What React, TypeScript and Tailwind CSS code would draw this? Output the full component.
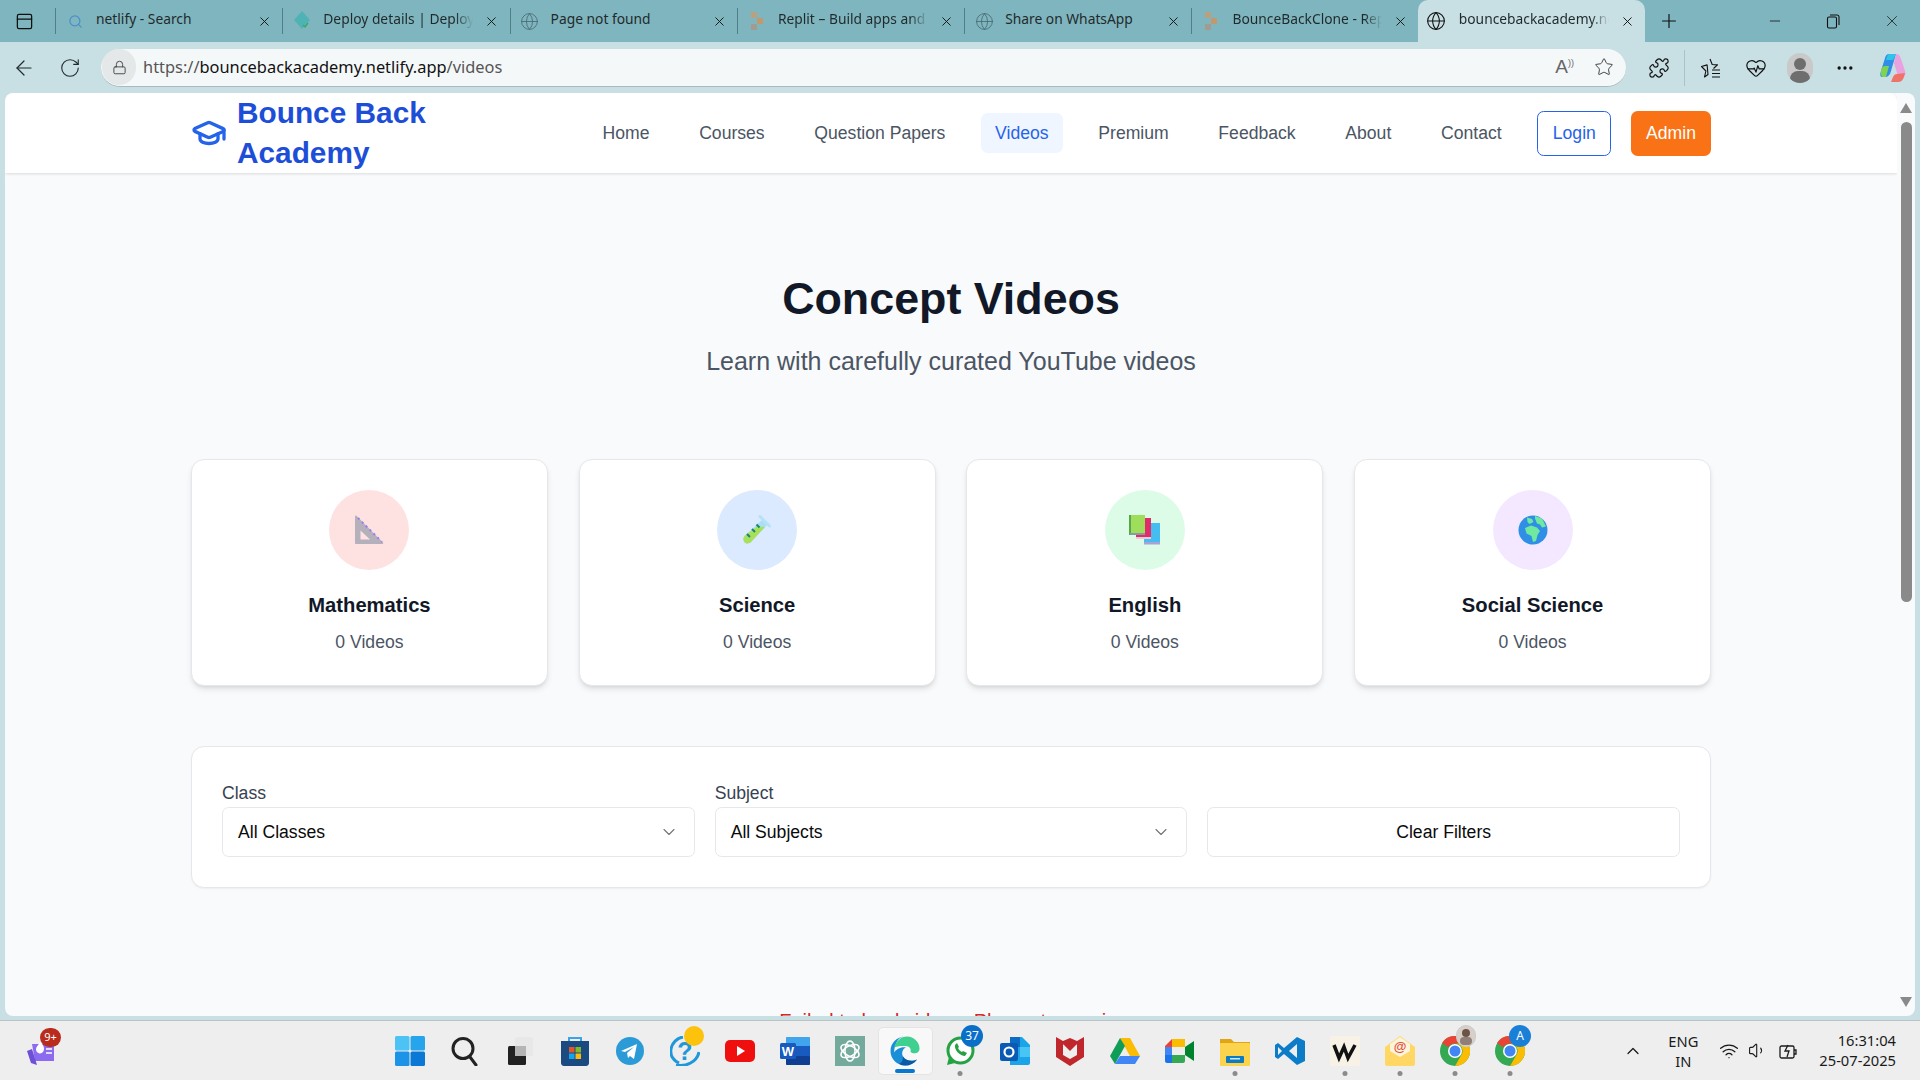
import type { ReactNode } from 'react';
import {
  ArrowLeft,
  ChevronDown,
  ChevronUp,
  Ellipsis,
  Globe,
  GraduationCap,
  HeartPulse,
  Lock,
  Minus,
  PanelTop,
  Plus,
  Puzzle,
  RotateCw,
  Search,
  Star,
  Volume1,
  Wifi,
  X,
} from 'lucide-react';

const DeployIcon = () => (
  <svg width="20" height="20" viewBox="0 0 20 20">
    <path d="M10 0l8 9-8 9-8-9z" fill="#4fb3b5" />
    <path d="M11 14l2 2 3-4" fill="none" stroke="#3fa66b" strokeWidth="1.4" />
  </svg>
);

const ReplitIcon = () => (
  <svg width="14" height="20" viewBox="0 0 14 20">
    <rect x="1" y="1" width="6" height="6" fill="#b9a17f" />
    <rect x="7" y="7" width="6" height="6" fill="#c09a6e" />
    <rect x="1" y="13" width="6" height="6" fill="#a49b90" />
  </svg>
);

const tabs: { title: string; icon: ReactNode; fade?: boolean }[] = [
  { title: 'netlify - Search', icon: <Search size={15} className="text-[#4a90c8]" strokeWidth={2} /> },
  { title: 'Deploy details | Deploys | bounce', icon: <DeployIcon />, fade: true },
  { title: 'Page not found', icon: <Globe size={19} strokeWidth={1} className="text-[#44666d]" /> },
  { title: 'Replit – Build apps and sites', icon: <ReplitIcon />, fade: true },
  { title: 'Share on WhatsApp', icon: <Globe size={19} strokeWidth={1} className="text-[#44666d]" /> },
  { title: 'BounceBackClone - Replit', icon: <ReplitIcon />, fade: true },
];

const navLinks = ['Home', 'Courses', 'Question Papers', 'Videos', 'Premium', 'Feedback', 'About', 'Contact'];

const RulerEmoji = () => (
  <svg width="30" height="30" viewBox="0 0 30 30">
    <path d="M1 1.5c0-1 1-1.300 1.700-.6L29 27.500c.6.7.2 1.500-.7 1.500H2c-.6 0-1-.4-1-1z" fill="#b4b1bd" />
    <path d="M6.500 15.500L16 24.500H6.500z" fill="#ffe2e2" />
    <path d="M4 3l24 24" stroke="#9a7cf0" strokeWidth="2" strokeDasharray="2 3.500" />
  </svg>
);

const TubeEmoji = () => (
  <svg width="30" height="30" viewBox="0 0 30 30">
    <path d="M20 5l5 5L9 27c-2 2-5 1.800-6.500.2S1 22.500 3 20.500z" fill="#a9def5" />
    <path d="M15 11.500l8 .5L9 27c-2 2-5 1.800-6.500.2S1 22.500 3 20.500z" fill="#a8e05a" />
    <path d="M18 1.500l9.500 9.500" stroke="#b5e2f8" strokeWidth="3" strokeLinecap="round" />
    <path d="M5 19l3 3M10 14l3 3M14.500 9.500l3 3" stroke="#16857a" strokeWidth="2" />
  </svg>
);

const BooksEmoji = () => (
  <svg width="32" height="30" viewBox="0 0 32 30">
    <rect x="15" y="8" width="16" height="20" fill="#45bdf0" />
    <rect x="15" y="27" width="16" height="2.500" fill="#a7a3d6" />
    <rect x="7" y="3" width="15" height="20" fill="#e02c68" />
    <rect x="7" y="22" width="15" height="2" fill="#f3c8d6" />
    <rect x="0" y="0" width="16" height="18" fill="#9fde5a" />
    <rect x="0" y="0" width="2" height="20" fill="#56a84a" />
    <rect x="1" y="18" width="15" height="2" fill="#8a9aa0" />
  </svg>
);

const GlobeEmoji = () => (
  <svg width="30" height="30" viewBox="0 0 30 30">
    <circle cx="15" cy="15" r="14.500" fill="#2f8fe6" />
    <path d="M9 2.500l5 1.500 1.500 3-4 2-2-2zM17 1l7 2.500 4 8-4 1-2-3-3-1-2-5zM7 13l6-2.500 6 2 3 3.500-2.500 4-1.500 6-3 1-1.500-6-5-2.500z" fill="#6fe8a0" />
  </svg>
);

const subjects = [
  { name: 'Mathematics', circle: 'bg-[#fee2e2]', emoji: <RulerEmoji /> },
  { name: 'Science', circle: 'bg-[#dbeafe]', emoji: <TubeEmoji /> },
  { name: 'English', circle: 'bg-[#dcfce7]', emoji: <BooksEmoji /> },
  { name: 'Social Science', circle: 'bg-[#f3e8ff]', emoji: <GlobeEmoji /> },
];

const Dot = () => <span className="absolute bottom-[-10px] left-1/2 h-[5px] w-[5px] -translate-x-1/2 rounded-full bg-[#8b8b8b]" />;

function ChromeLogo() {
  return (
    <svg width="30" height="30" viewBox="0 0 30 30">
      <circle cx="15" cy="15" r="15" fill="#34a853" />
      <path d="M15 0a15 15 0 0 1 13 7.500H15a7.500 7.500 0 0 0-6.500 3.750L2 7A15 15 0 0 1 15 0z" fill="#ea4335" />
      <path d="M28 7.500A15 15 0 0 1 15 30l6.500-11.250A7.500 7.500 0 0 0 15 7.500z" fill="#fbbc04" />
      <circle cx="15" cy="15" r="7" fill="#fff" />
      <circle cx="15" cy="15" r="5.500" fill="#4285f4" />
    </svg>
  );
}

const taskIcons: { key: string; dot?: boolean; active?: boolean; badge?: ReactNode; svg: ReactNode }[] = [
  {
    key: 'start',
    svg: (
      <svg width="30" height="30" viewBox="0 0 30 30">
        <rect x="0" y="0" width="14.500" height="14.500" rx="1.500" fill="#4cc2f5" />
        <rect x="15.500" y="0" width="14.500" height="14.500" rx="1.500" fill="#27a5ec" />
        <rect x="0" y="15.500" width="14.500" height="14.500" rx="1.500" fill="#1b93e6" />
        <rect x="15.500" y="15.500" width="14.500" height="14.500" rx="1.500" fill="#0a78d4" />
      </svg>
    ),
  },
  {
    key: 'search',
    svg: (
      <svg width="30" height="30" viewBox="0 0 30 30" fill="none" stroke="#222" strokeWidth="3">
        <circle cx="13" cy="12.500" r="10" />
        <path d="M20 21l6 8" strokeLinecap="round" />
      </svg>
    ),
  },
  {
    key: 'taskview',
    svg: (
      <svg width="30" height="30" viewBox="0 0 30 30">
        <rect x="3" y="10" width="18" height="19" rx="1.500" fill="#222" />
        <rect x="10" y="1" width="18" height="19" rx="1.500" fill="#e6e6e6" opacity=".85" />
        <rect x="10" y="10" width="11" height="10" fill="#b5b5b5" />
      </svg>
    ),
  },
  {
    key: 'store',
    svg: (
      <svg width="30" height="30" viewBox="0 0 30 30">
        <path d="M9 5V2h12v3" fill="none" stroke="#39a5e8" strokeWidth="2" />
        <path d="M1 5h28v22c0 1.500-1 3-3 3H4c-2 0-3-1.500-3-3z" fill="#1a4a80" />
        <rect x="9" y="11" width="5.500" height="5.500" fill="#e8542a" />
        <rect x="15.500" y="11" width="5.500" height="5.500" fill="#7fba25" />
        <rect x="9" y="17.500" width="5.500" height="5.500" fill="#10a5ee" />
        <rect x="15.500" y="17.500" width="5.500" height="5.500" fill="#fcb813" />
      </svg>
    ),
  },
  {
    key: 'telegram',
    svg: (
      <svg width="30" height="30" viewBox="0 0 30 30">
        <circle cx="15" cy="15" r="14" fill="#2a9bd6" />
        <path d="M6 15l16-7-3 15-4-3-2 2-1-5 7-6-9 5z" fill="#fff" />
      </svg>
    ),
  },
  {
    key: 'help',
    badge: <span className="absolute right-[-4px] top-[-10px] h-[20px] w-[20px] rounded-full bg-[#fcc20c]" />,
    svg: (
      <svg width="30" height="30" viewBox="0 0 30 30">
        <path d="M9 27C3 24 0 19 1 13 2 7 7 2 13 1" fill="none" stroke="#1e98d8" strokeWidth="3" />
        <path d="M6 29c10 2 21-3 23-13" fill="none" stroke="#1e98d8" strokeWidth="3" />
        <text x="15" y="24" textAnchor="middle" fontSize="25" fontWeight="700" fontFamily="Liberation Sans" fill="#1e98d8">?</text>
      </svg>
    ),
  },
  {
    key: 'youtube',
    svg: (
      <svg width="30" height="30" viewBox="0 0 30 30">
        <rect x="0" y="4" width="30" height="22" rx="5" fill="#f00f0f" />
        <path d="M12 10l8 5-8 5z" fill="#fff" />
      </svg>
    ),
  },
  {
    key: 'word',
    svg: (
      <svg width="30" height="30" viewBox="0 0 30 30">
        <rect x="6" y="1" width="24" height="28" rx="2" fill="#2b7cd3" />
        <rect x="6" y="10" width="24" height="10" fill="#185abd" />
        <rect x="6" y="20" width="24" height="9" rx="1" fill="#103f91" />
        <rect x="6" y="1" width="24" height="9" rx="1" fill="#41a5ee" />
        <rect x="0" y="7" width="16" height="16" rx="1.500" fill="#185abd" />
        <text x="8" y="20" textAnchor="middle" fontSize="13" fontWeight="700" fontFamily="Liberation Sans" fill="#fff">W</text>
      </svg>
    ),
  },
  {
    key: 'chatgpt',
    svg: (
      <svg width="30" height="30" viewBox="0 0 30 30">
        <rect width="30" height="30" fill="#74aa9c" />
        <g fill="none" stroke="#fff" strokeWidth="1.500">
          <ellipse cx="15" cy="15" rx="5" ry="10" />
          <ellipse cx="15" cy="15" rx="5" ry="10" transform="rotate(60 15 15)" />
          <ellipse cx="15" cy="15" rx="5" ry="10" transform="rotate(120 15 15)" />
        </g>
      </svg>
    ),
  },
  {
    key: 'edge',
    active: true,
    svg: (
      <svg width="30" height="30" viewBox="0 0 30 30">
        <path d="M15 .5C7 .5 .5 7 .5 15S7 29.500 15 29.500c5 0 9-2 12-6-4 2-11 2-14-3-2-4 0-8 3-9-5-1-10 2-12 5C5 6 9 .5 15 .5z" fill="#1a8fd8" />
        <path d="M4 12C6 5 11 .5 17 .5c7 0 12.500 6 12.500 12 0 5-6 6-9 3.500 1-3-1-6-5-6s-9 0-11.500 2z" fill="#3fcf8e" />
        <path d="M13 20.500c3 5 10 5 14 3-3 4-7 6-12 6-3 0-5-1-6-2 3 0 4-4 4-7z" fill="#0c59a4" />
      </svg>
    ),
  },
  {
    key: 'whatsapp',
    dot: true,
    badge: (
      <span className="absolute right-[-8px] top-[-11px] flex h-[22px] w-[22px] items-center justify-center rounded-full bg-[#0a6fc9] text-[12px] text-white">37</span>
    ),
    svg: (
      <svg width="30" height="30" viewBox="0 0 30 30">
        <circle cx="15.500" cy="14.500" r="12.500" fill="#fff" stroke="#25a244" strokeWidth="3" />
        <path d="M2 29l2-8 6 6z" fill="#25a244" />
        <path d="M10 9c-1 5 5 11 10 11l2-3-4-2-1 1c-2-1-3-2-4-4l1-1-2-4z" fill="#25a244" />
      </svg>
    ),
  },
  {
    key: 'outlook',
    svg: (
      <svg width="30" height="30" viewBox="0 0 30 30">
        <path d="M10 1h12l8 8v18c0 1-1 2-2 2H10z" fill="#1ba4e8" />
        <path d="M10 1h10v10H10z" fill="#0a6cc2" />
        <path d="M20 11h10v10H20z" fill="#49c5f5" />
        <rect x="0" y="7" width="18" height="18" rx="2" fill="#0a5ab5" />
        <circle cx="9" cy="16" r="4.500" fill="none" stroke="#fff" strokeWidth="2.200" />
      </svg>
    ),
  },
  {
    key: 'mcafee',
    svg: (
      <svg width="30" height="30" viewBox="0 0 30 30">
        <path d="M1 1l7 4 7-3 7 3 7-4v20l-14 9-14-9z" fill="#c0272d" />
        <path d="M8 8l7 4 7-4v11l-7 4-7-4z" fill="#eeeeee" />
        <path d="M8 8l7 7 7-7" fill="#c0272d" />
      </svg>
    ),
  },
  {
    key: 'drive',
    svg: (
      <svg width="30" height="30" viewBox="0 0 30 30">
        <path d="M10 2h10l10 18H20z" fill="#fbbc04" />
        <path d="M10 2L0 20l5 8 10-18z" fill="#0f9d58" />
        <path d="M5 28h20l5-8H10z" fill="#4285f4" />
      </svg>
    ),
  },
  {
    key: 'meet',
    svg: (
      <svg width="30" height="30" viewBox="0 0 30 30">
        <path d="M7 3h13v8H7v8H0V10z" fill="#ea4335" />
        <path d="M7 3h13v8H7z" fill="#fbbc04" />
        <path d="M0 11h7v8H0z" fill="#4285f4" />
        <path d="M0 19h7v8H2c-1 0-2-1-2-2z" fill="#1a73e8" />
        <path d="M7 19h13v6c0 1-1 2-2 2H7z" fill="#34a853" />
        <path d="M20 11v8l9 6V5z" fill="#00832d" />
      </svg>
    ),
  },
  {
    key: 'files',
    dot: true,
    svg: (
      <svg width="30" height="30" viewBox="0 0 30 30">
        <path d="M0 3h11l3 3h16v6H0z" fill="#e0a512" />
        <rect x="0" y="7" width="30" height="23" rx="1" fill="#fcd34d" />
        <rect x="6" y="20" width="18" height="7" rx="1" fill="#0b7bc4" />
        <rect x="10" y="22" width="10" height="1.500" fill="#cfe8f6" />
      </svg>
    ),
  },
  {
    key: 'vscode',
    svg: (
      <svg width="30" height="30" viewBox="0 0 30 30">
        <path d="M22 1l8 4v20l-8 4-13-11-6 5-3-2v-12l3-2 6 5z" fill="#0d7cc8" />
        <path d="M22 8v14l-8-7z" fill="#eeeeee" />
        <path d="M3 11l4 4-4 4z" fill="#eeeeee" />
      </svg>
    ),
  },
  {
    key: 'notion',
    dot: true,
    svg: (
      <svg width="30" height="30" viewBox="0 0 30 30">
        <rect width="30" height="30" rx="2" fill="#f8f1e6" />
        <path d="M4 9l5 13 5-11 4 11 7-13" fill="none" stroke="#111" strokeWidth="3.500" />
      </svg>
    ),
  },
  {
    key: 'mail',
    dot: true,
    svg: (
      <svg width="30" height="30" viewBox="0 0 30 30">
        <path d="M0 11L15 0l15 11v17c0 1-1 2-2 2H2c-1 0-2-1-2-2z" fill="#ffd765" />
        <path d="M5 8l10-7 10 7v7l-10 6-10-6z" fill="#fbf4dc" />
        <text x="15" y="15" textAnchor="middle" fontSize="13" fontWeight="700" fontFamily="Liberation Sans" fill="#e5503c">@</text>
      </svg>
    ),
  },
  {
    key: 'chrome',
    dot: true,
    badge: (
      <span className="absolute right-[-6px] top-[-11px] h-[22px] w-[20px] rounded-full border border-[#cccccc] bg-[#d8cfc8]">
        <span className="absolute left-[5px] top-[3px] h-[8px] w-[8px] rounded-full bg-[#6b5348]" />
        <span className="absolute left-[3px] top-[11px] h-[8px] w-[12px] rounded-full bg-[#8f7f76]" />
      </span>
    ),
    svg: <ChromeLogo />,
  },
  {
    key: 'chrome2',
    dot: true,
    badge: (
      <span className="absolute right-[-6px] top-[-11px] flex h-[22px] w-[22px] items-center justify-center rounded-full bg-[#1a7fd6] text-[12px] text-white">A</span>
    ),
    svg: <ChromeLogo />,
  },
];

function CopilotLogo() {
  return (
    <svg width="26" height="30" viewBox="0 0 26 30">
      <path d="M9 1h7l-5 17c-1 4-3 6-6 6H2C0 24 0 21 1 18L5 5c.7-2.500 2-4 4-4z" fill="#2f8fe8" />
      <path d="M1 18c0-3 2-5 5-5h3l-3 11H3c-2 0-2-3-2-6z" fill="#7fd34e" />
      <path d="M16 1c3 0 4 2 5 5l4 12c1 3 0 5-3 5h-4l-4-13z" fill="#e9a1e0" />
      <path d="M11 29h7c3 0 5-2 6-5l1-4-8 1c-2 0-3 1-4 3z" fill="#f0736a" />
      <path d="M9 1h7l-3 6H6C7 3 8 1 9 1z" fill="#30c5e8" />
    </svg>
  );
}

function Avatar() {
  return (
    <div className="relative h-[30px] w-[26px] overflow-hidden rounded-full bg-[#c9c9c9]">
      <span className="absolute left-[7px] top-[5px] h-[12px] w-[12px] rounded-full bg-[#6e6e6e]" />
      <span className="absolute left-[3px] top-[18px] h-[16px] w-[20px] rounded-full bg-[#6e6e6e]" />
    </div>
  );
}

function TabBar() {
  return (
    <div className="flex h-[42px] shrink-0 items-stretch bg-[#7fb5be] font-['Noto_Sans',sans-serif] text-[13.800px] text-[#1f2a2c]">
      <div className="flex w-[55px] items-center pl-[15px]">
        <PanelTop size={19} strokeWidth={1.6} className="text-[#111]" />
      </div>
      {tabs.map((tab) => (
        <div key={tab.title} className="flex w-[227.3px] items-center">
          <span className="h-[26px] w-px bg-[#4f7f87]" />
          <span className="flex w-[37px] justify-center pl-px">{tab.icon}</span>
          <span className="ml-[3px] w-[150px] overflow-hidden whitespace-nowrap pb-[3px]">
            {tab.fade ? (
              <span className="block [mask-image:linear-gradient(to_right,black_88%,transparent)]">{tab.title}</span>
            ) : (
              tab.title
            )}
          </span>
          <X size={15} strokeWidth={1.5} className="ml-[11px] text-[#111]" />
        </div>
      ))}
      <div className="ml-[-1px] flex w-[227px] items-center rounded-t-[10px] bg-[#c8dfe3]">
        <span className="flex w-[36px] justify-center"><Globe size={20} strokeWidth={1.3} className="text-[#111]" /></span>
        <span className="ml-[5px] w-[150px] overflow-hidden whitespace-nowrap pb-[3px] [mask-image:linear-gradient(to_right,black_88%,transparent)]">bouncebackacademy.netlify.app</span>
        <X size={15} strokeWidth={1.5} className="ml-[11px] text-[#111]" />
      </div>
      <div className="ml-[13px] flex items-center">
        <Plus size={22} strokeWidth={1.3} className="text-[#111]" />
      </div>
      <div className="ml-auto flex items-center gap-[42px] pr-[19px] text-[#111]">
        <Minus size={16} strokeWidth={1.2} />
        <svg width="16" height="16" viewBox="0 0 16 16" fill="none" stroke="#111" strokeWidth="1.100">
          <rect x="2.500" y="4" width="9" height="11" rx="1.500" />
          <path d="M5 2h6.500A2 2 0 0 1 14 4v8" />
        </svg>
        <X size={18} strokeWidth={1} />
      </div>
    </div>
  );
}

function Toolbar() {
  return (
    <div className="flex h-[51px] shrink-0 items-center bg-[#c8dfe3] text-[#1f2a2c]">
      <div className="flex w-[101px] items-center">
        <ArrowLeft size={24} strokeWidth={1.2} className="ml-[12px]" />
        <RotateCw size={22} strokeWidth={1.2} className="ml-[23px]" />
      </div>
      <div className="flex h-[38px] w-[1525px] items-center rounded-full border-b border-[#aab9bc] bg-[#f5f8f9] font-['Noto_Sans',sans-serif]">
        <span className="ml-px flex h-[36px] w-[34px] items-center justify-center rounded-full bg-[#e4e8e9]">
          <Lock size={15} strokeWidth={1.5} className="text-[#444]" />
        </span>
        <span className="ml-[7px] text-[16.400px] text-[#555]">
          https://<span className="text-[#111]">bouncebackacademy.netlify.app</span>/videos
        </span>
        <span className="ml-auto flex items-center gap-[20px] pr-[12px] text-[#666]">
          <span className="font-['Liberation_Sans',sans-serif] text-[19px]">A<span className="align-super text-[9px]">))</span></span>
          <Star size={20} strokeWidth={1.2} className="text-[#444]" />
        </span>
      </div>
      <div className="flex flex-1 items-center">
        <Puzzle size={22} strokeWidth={1.3} className="ml-[22px] text-[#111]" />
        <span className="ml-[14px] h-[36px] w-px bg-[#aac3c8]" />
        <svg className="ml-[15px]" width="22" height="22" viewBox="0 0 22 22" fill="none" stroke="#111" strokeWidth="1.100">
          <path d="M10 2l2.200 5.500 5.300.4-4 3.600M8 17.500l-3.500 2.500 1.400-6L1.500 9.500l5.600-1.600z" strokeLinejoin="round" />
          <path d="M12 13h8M12 16.500h8M12 20h8" />
        </svg>
        <HeartPulse size={22} strokeWidth={1.3} className="ml-[23px] text-[#111]" />
        <span className="ml-[20px]"><Avatar /></span>
        <Ellipsis size={20} className="ml-[22px] text-[#111]" />
        <span className="ml-[25px]"><CopilotLogo /></span>
      </div>
    </div>
  );
}

function Header() {
  return (
    <header className="flex h-[80px] shrink-0 justify-center rounded-t-[8px] bg-white shadow-[0_1px_3px_rgba(0,0,0,0.12)]">
      <div className="flex w-[1520px] items-center justify-between">
        <div className="flex items-center gap-[10px]">
          <GraduationCap size={36} strokeWidth={2.2} className="text-[#2563eb]" />
          <span className="w-[220px] text-[29.8px] font-bold leading-[40px] text-[#1d4ed8]">Bounce Back Academy</span>
        </div>
        <nav className="flex items-center gap-[21.700px] text-[17.600px] text-[#4b5563]">
          {navLinks.map((link) => (
            <a
              key={link}
              className={`rounded-[6.600px] px-[14px] py-[8px] leading-[24px] ${
                link === 'Videos' ? 'bg-[#eff6ff] text-[#2563eb]' : ''
              }`}
            >
              {link}
            </a>
          ))}
          <button className="h-[45px] w-[74px] rounded-[6.600px] border border-[#2563eb] bg-white text-[#2563eb]">Login</button>
          <button className="ml-[-2px] h-[45px] w-[80px] rounded-[6.600px] bg-[#f97316] font-medium text-white">Admin</button>
        </nav>
      </div>
    </header>
  );
}

function SubjectCard({ name, circle, emoji }: { name: string; circle: string; emoji: ReactNode }) {
  return (
    <div className="flex h-[227px] flex-col items-center rounded-[13px] border border-[#e5e7eb] bg-white pt-[30px] shadow-[0_4px_6px_-1px_rgba(0,0,0,0.1),0_2px_4px_-2px_rgba(0,0,0,0.1)]">
      <div className={`flex h-[80px] w-[80px] items-center justify-center rounded-full ${circle}`}>{emoji}</div>
      <h3 className="mt-[20px] text-[20.200px] font-bold leading-[30px] text-[#111827]">{name}</h3>
      <p className="mt-[9px] text-[17.600px] leading-[27px] text-[#4b5563]">0 Videos</p>
    </div>
  );
}

function SelectBox({ label, value }: { label: string; value: string }) {
  return (
    <div>
      <label className="mb-[1px] block text-[17.600px] leading-[26px] text-[#374151]">{label}</label>
      <div className="flex h-[50px] items-center justify-between rounded-[6.600px] border border-[#e5e7eb] bg-white pl-[15px] pr-[15px] text-[17.600px] text-[#0a0a0a]">
        {value}
        <ChevronDown size={20} strokeWidth={1.3} className="text-[#737373]" />
      </div>
    </div>
  );
}

function PageContent() {
  return (
    <div className="flex min-w-0 flex-1 flex-col overflow-hidden rounded-l-[8px] bg-[#f9fafb] font-['Liberation_Sans',sans-serif]">
      <Header />
      <main className="mx-auto w-[1520px] shrink-0 pt-[96px]">
        <h1 className="text-center text-[44.800px] font-bold leading-[58px] text-[#111827]">Concept Videos</h1>
        <p className="mt-[19px] text-center text-[25px] leading-[31px] text-[#4b5563]">Learn with carefully curated YouTube videos</p>
        <section className="mt-[82px] grid grid-cols-4 gap-[30.800px]">
          {subjects.map((subject) => (
            <SubjectCard key={subject.name} {...subject} />
          ))}
        </section>
        <section className="mt-[60px] grid h-[142px] grid-cols-3 items-end gap-[20px] rounded-[13px] border border-[#e5e7eb] bg-white px-[30px] pb-[30px] shadow-[0_1px_2px_rgba(0,0,0,0.05)]">
          <SelectBox label="Class" value="All Classes" />
          <SelectBox label="Subject" value="All Subjects" />
          <button className="h-[50px] rounded-[6.600px] border border-[#e5e7eb] bg-white text-[17.600px] text-[#0a0a0a]">Clear Filters</button>
        </section>
        <p className="mt-[120px] text-center text-[20px] leading-[26px] text-[#dc2626]">Failed to load videos. Please try again.</p>
      </main>
    </div>
  );
}

function Scrollbar() {
  return (
    <div className="flex w-[18px] shrink-0 flex-col items-center rounded-r-[8px] bg-[#f9fafb] pt-[10px]">
      <svg width="12" height="10" viewBox="0 0 12 10"><path d="M6 0l6 10H0z" fill="#8a8a8a" /></svg>
      <div className="mt-[9px] h-[480px] w-[11px] rounded-full bg-[#8a8a8a]" />
      <svg className="mb-[9px] mt-auto" width="12" height="10" viewBox="0 0 12 10"><path d="M0 0h12L6 10z" fill="#8a8a8a" /></svg>
    </div>
  );
}

function Taskbar() {
  return (
    <div className="flex h-[60px] shrink-0 items-center border-t border-[#b9c2c4] bg-[#eeeeee] font-['Noto_Sans',sans-serif] text-[#1a1a1a]">
      <div className="flex w-[382.500px] pl-[27px]">
        <div className="relative">
          <svg width="28" height="30" viewBox="0 0 28 30">
            <path d="M5 8h22v17H8z" fill="#8b6cf0" />
            <path d="M0 15l5-2 5 16-6-2z" fill="#6d4fd8" />
            <path d="M13 6c4 3 5 7 3 10a4 4 0 0 1-7-2c0-4 3-5 4-8z" fill="#fff" />
            <path d="M19 13h6M19 17h6" stroke="#fff" strokeWidth="1.500" />
          </svg>
          <span className="absolute left-[13px] top-[-8px] flex h-[19px] w-[21px] items-center justify-center rounded-full bg-[#b92b1c] text-[11px] text-white">9+</span>
        </div>
      </div>
      <div className="flex">
        {taskIcons.map((icon) => (
          <div key={icon.key} className={`relative flex h-[48px] w-[55px] items-center justify-center rounded-[5px] ${icon.active ? 'border border-[#e4e4e4] bg-[#f8f8f8]' : ''}`}>
            <div className="relative h-[30px] w-[30px]">
              {icon.svg}
              {icon.badge}
              {icon.dot ? <Dot /> : null}
            </div>
            {icon.active ? <span className="absolute bottom-[1px] left-1/2 h-[4px] w-[20px] -translate-x-1/2 rounded-full bg-[#0b78d0]" /> : null}
          </div>
        ))}
      </div>
      <div className="ml-auto flex items-center pr-[24px]">
        <ChevronUp size={20} strokeWidth={1.5} />
        <div className="ml-[18px] w-[44px] text-center text-[14.700px] leading-[20px]">
          <div>ENG</div>
          <div>IN</div>
        </div>
        <Wifi size={20} strokeWidth={1.6} className="ml-[14px]" />
        <Volume1 size={19} strokeWidth={1.4} className="ml-[9px]" />
        <svg className="ml-[11px]" width="20" height="20" viewBox="0 0 20 20" fill="none" stroke="#1a1a1a" strokeWidth="1.300">
          <rect x="2" y="5" width="14" height="12" rx="1.500" />
          <path d="M16 9h2v4h-2M10 4L7 10h4l-2 6" />
        </svg>
        <div className="ml-[21px] pb-px text-right text-[14.700px] leading-[20px]">
          <div>16:31:04</div>
          <div>25-07-2025</div>
        </div>
      </div>
    </div>
  );
}

export default function App() {
  return (
    <div className="flex h-screen w-full flex-col overflow-hidden bg-[#c8dfe3]">
      <TabBar />
      <Toolbar />
      <div className="mx-[5px] mb-[4px] flex min-h-0 flex-1">
        <PageContent />
        <Scrollbar />
      </div>
      <Taskbar />
    </div>
  );
}
